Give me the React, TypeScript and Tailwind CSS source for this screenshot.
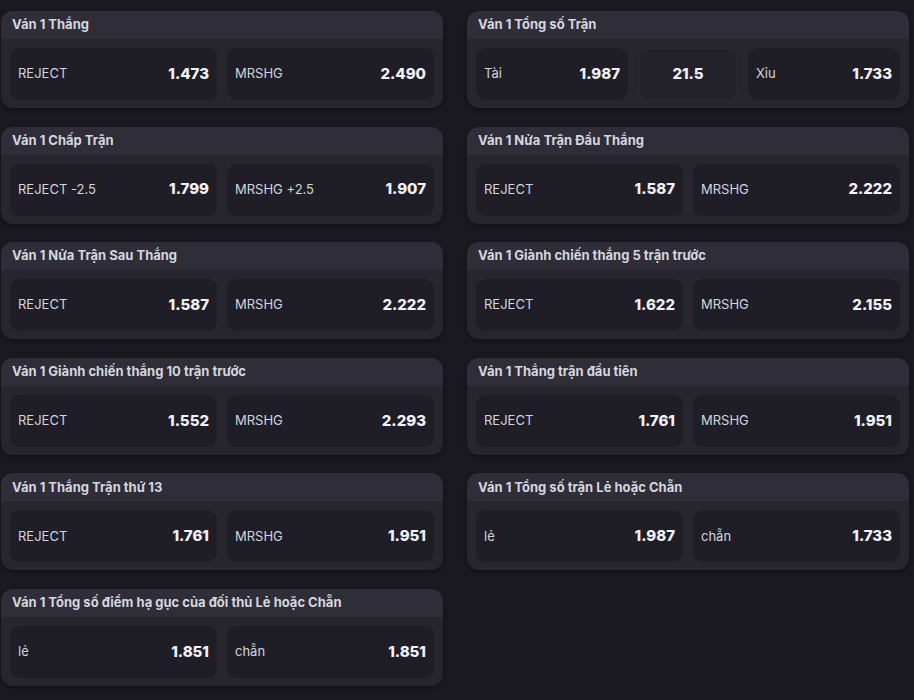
import React from 'react';

type Cell = { label?: string; odds: string; center?: boolean };
type Market = { title: string; cells: Cell[] };

const left: Market[] = [
  { title: 'Ván 1 Thắng', cells: [{ label: 'REJECT', odds: '1.473' }, { label: 'MRSHG', odds: '2.490' }] },
  { title: 'Ván 1 Chấp Trận', cells: [{ label: 'REJECT -2.5', odds: '1.799' }, { label: 'MRSHG +2.5', odds: '1.907' }] },
  { title: 'Ván 1 Nửa Trận Sau Thắng', cells: [{ label: 'REJECT', odds: '1.587' }, { label: 'MRSHG', odds: '2.222' }] },
  { title: 'Ván 1 Giành chiến thắng 10 trận trước', cells: [{ label: 'REJECT', odds: '1.552' }, { label: 'MRSHG', odds: '2.293' }] },
  { title: 'Ván 1 Thắng Trận thứ 13', cells: [{ label: 'REJECT', odds: '1.761' }, { label: 'MRSHG', odds: '1.951' }] },
  { title: 'Ván 1 Tổng số điểm hạ gục của đối thủ Lẻ hoặc Chẵn', cells: [{ label: 'lẻ', odds: '1.851' }, { label: 'chẵn', odds: '1.851' }] },
];

const right: Market[] = [
  { title: 'Ván 1 Tổng số Trận', cells: [{ label: 'Tài', odds: '1.987' }, { odds: '21.5', center: true }, { label: 'Xỉu', odds: '1.733' }] },
  { title: 'Ván 1 Nửa Trận Đầu Thắng', cells: [{ label: 'REJECT', odds: '1.587' }, { label: 'MRSHG', odds: '2.222' }] },
  { title: 'Ván 1 Giành chiến thắng 5 trận trước', cells: [{ label: 'REJECT', odds: '1.622' }, { label: 'MRSHG', odds: '2.155' }] },
  { title: 'Ván 1 Thắng trận đầu tiên', cells: [{ label: 'REJECT', odds: '1.761' }, { label: 'MRSHG', odds: '1.951' }] },
  { title: 'Ván 1 Tổng số trận Lẻ hoặc Chẵn', cells: [{ label: 'lẻ', odds: '1.987' }, { label: 'chẵn', odds: '1.733' }] },
];

const MarketCard: React.FC<{ market: Market }> = ({ market }) => {
  const three = market.cells.length === 3;
  return (
    <div className="rounded-[12px] overflow-hidden bg-[#27262f] shadow-[0_2px_4px_rgba(0,0,0,0.35)]">
      <div className="h-[28px] bg-[#2e2d38] px-[11px] flex items-center text-[13px] font-bold text-[#d6d6de]">
        {market.title}
      </div>
      <div
        className={
          three
            ? 'grid grid-cols-[1fr_98px_1fr] gap-[11px] px-[9px] pt-[9px] pb-[8px]'
            : 'grid grid-cols-2 gap-[10px] px-[9px] pt-[9px] pb-[8px]'
        }
      >
        {market.cells.map((c, i) =>
          c.center ? (
            <div
              key={i}
              className="h-[52px] rounded-[9px] bg-[#23222a] border border-[#2b2a33] flex items-center justify-center text-[15px] font-extrabold text-[#f2f2f7]"
            >
              {c.odds}
            </div>
          ) : (
            <div
              key={i}
              className="h-[52px] rounded-[9px] bg-[#1f1e26] px-[8px] flex items-center justify-between"
            >
              <span className="text-[13px] text-[#d4d4dc]">{c.label}</span>
              <span className="text-[15px] font-extrabold text-[#f2f2f7]">{c.odds}</span>
            </div>
          )
        )}
      </div>
    </div>
  );
};

export default function App() {
  return (
    <div
      className="min-h-[700px] bg-[#1a1920] pt-[11px] pl-px"
      style={{ fontFamily: 'Inter, "Noto Sans", sans-serif' }}
    >
      <div className="grid grid-cols-[442px_442px] gap-x-6 items-start">
        <div className="flex flex-col gap-[18.6px]">
          {left.map((m) => (
            <MarketCard key={m.title} market={m} />
          ))}
        </div>
        <div className="flex flex-col gap-[18.6px]">
          {right.map((m) => (
            <MarketCard key={m.title} market={m} />
          ))}
        </div>
      </div>
    </div>
  );
}
